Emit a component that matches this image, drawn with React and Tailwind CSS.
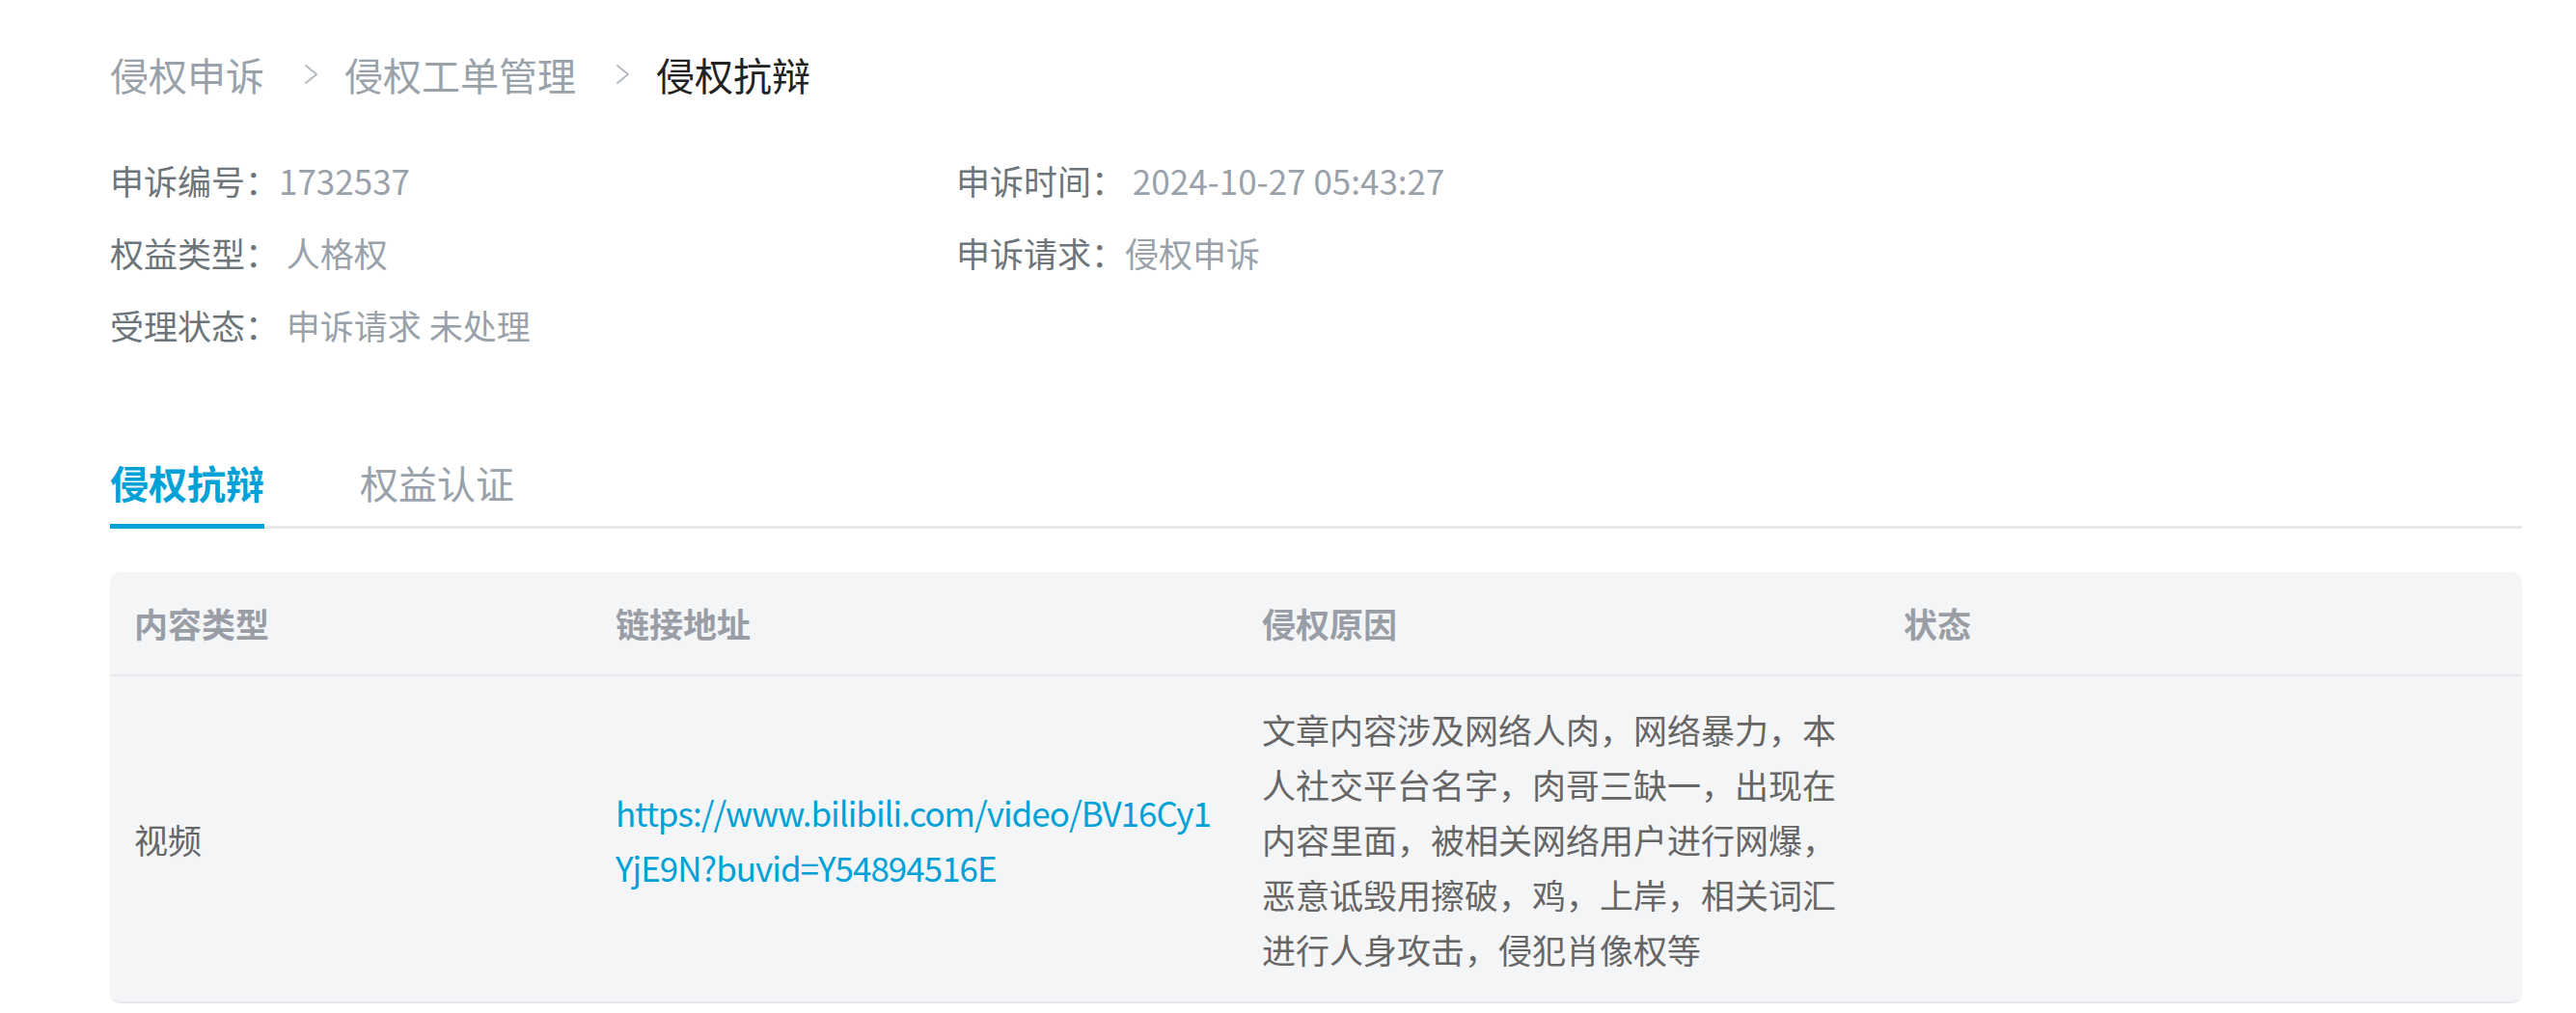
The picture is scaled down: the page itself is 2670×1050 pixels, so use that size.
import React from 'react';

const Chevron = () => (
  <svg className="ml-[40px] mr-[26px] shrink-0" width="17" height="24" viewBox="0 0 17 24" fill="none">
    <polyline points="3,3 14,12 3,21" stroke="#b4bac2" strokeWidth="2" strokeLinecap="round" strokeLinejoin="round" />
  </svg>
);

const infoRows = [
  [
    { label: '申诉编号：', value: '1732537', gap: false },
    { label: '申诉时间：', value: '2024-10-27 05:43:27', gap: true },
  ],
  [
    { label: '权益类型：', value: '人格权', gap: true },
    { label: '申诉请求：', value: '侵权申诉', gap: false },
  ],
  [{ label: '受理状态：', value: '申诉请求 未处理', gap: true }],
];

export default function App() {
  return (
    <div className="min-h-screen bg-white font-['Noto_Sans_CJK_SC','Noto_Sans',sans-serif] pl-[114px] pr-[56px] pt-[52px]">
      {/* Breadcrumb */}
      <div className="flex items-center h-[50px] leading-[50px] text-[40px]">
        <span className="text-[#99a2aa]">侵权申诉</span>
        <Chevron />
        <span className="text-[#99a2aa]">侵权工单管理</span>
        <Chevron />
        <span className="text-[#222]">侵权抗辩</span>
      </div>

      {/* Info */}
      <div className="mt-[47px] text-[35px]">
        {infoRows.map((row, i) => (
          <div key={i} className="grid grid-cols-[877px_1fr] h-[75px] leading-[75px]">
            {row.map((item) => (
              <div key={item.label} className="whitespace-pre">
                <span className="text-[#6d757a]">{item.label}</span>
                <span className="text-[#99a2aa]">{item.gap ? ' ' : ''}{item.value}</span>
              </div>
            ))}
          </div>
        ))}
      </div>

      {/* Tabs */}
      <div className="mt-[96px] flex items-end gap-[99px] border-b-[3px] border-[#e7e7ec] text-[40px]">
        <div className="relative leading-[60px] pb-[15px] font-bold text-[#00a1d6]">
          侵权抗辩
          <div className="absolute left-0 right-0 -bottom-[3px] h-[5px] bg-[#00a1d6]"></div>
        </div>
        <div className="leading-[60px] pb-[15px] text-[#99a2aa]">权益认证</div>
      </div>

      {/* Table */}
      <div className="mt-[45px] rounded-[10px] bg-[#f4f5f7] border-b-[2px] border-[#e7e8ec] text-[35px]">
        <div className="grid grid-cols-[499px_670px_665px_1fr] h-[108px] items-center border-b-[2.5px] border-[#e7e8ec] font-bold text-[#999ea6]">
          <div className="pl-[25px]">内容类型</div>
          <div className="pl-[25px]">链接地址</div>
          <div className="pl-[25px]">侵权原因</div>
          <div className="pl-[25px]">状态</div>
        </div>
        <div className="grid grid-cols-[499px_670px_665px_1fr] items-center py-[26px] leading-[57px]">
          <div className="pl-[25px] text-[#666]">视频</div>
          <div className="pl-[25px] pr-[10px] text-[#00a1d6] tracking-[-1px] whitespace-nowrap">
            https://www.bilibili.com/video/BV16Cy1
            <br />
            YjE9N?buvid=Y54894516E
          </div>
          <div className="px-[25px] text-[#666]">
            文章内容涉及网络人肉，网络暴力，本人社交平台名字，肉哥三缺一，出现在内容里面，被相关网络用户进行网爆，恶意诋毁用擦破，鸡，上岸，相关词汇进行人身攻击，侵犯肖像权等
          </div>
          <div className="pl-[25px]"></div>
        </div>
      </div>
    </div>
  );
}
